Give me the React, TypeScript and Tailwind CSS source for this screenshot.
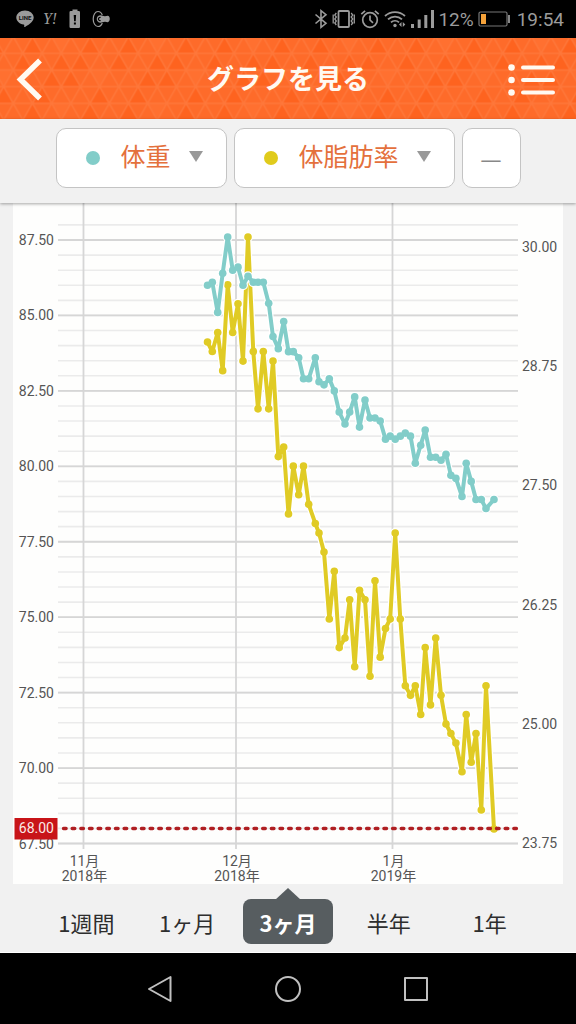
import { useState } from "react"

const periods = [
  { id: "week", label: "1週間" },
  { id: "month", label: "1ヶ月" },
  { id: "quarter", label: "3ヶ月" },
  { id: "half", label: "半年" },
  { id: "year", label: "1年" },
]

// x position of each measurement on the time axis
const times = [
  194.5, 199.3, 204.7, 209.7, 214.7, 219.7, 225, 230, 235, 240.3,
  245, 250.3, 255.7, 260, 265.3, 270.7, 275.5, 280.3, 285.7, 290.5,
  295.7, 302.3, 306, 311, 316.3, 321.3, 326.2, 332, 336.7, 341.7,
  346.5, 352, 357, 362, 367.2, 372.5, 377.2, 382.2, 387.3, 392.3,
  397.5, 402.3, 407.7, 412.2, 417.5, 422.7, 428, 433, 437.9, 442.9,
  449, 453.2, 458.2, 463, 468.3, 473, 481,
]

const weight = [
  86.0, 86.1, 85.1, 86.4, 87.6, 86.5, 86.6, 86.0, 86.3, 86.1,
  86.1, 86.1, 85.4, 84.3, 83.9, 84.8, 83.8, 83.8, 83.6, 82.9,
  82.9, 83.6, 82.8, 82.7, 82.9, 82.5, 81.8, 81.4, 81.8, 82.3,
  81.3, 82.2, 81.6, 81.6, 81.5, 80.9, 81.0, 80.9, 81.0, 81.1,
  81.0, 80.1, 80.7, 81.2, 80.3, 80.3, 80.2, 80.4, 79.7, 79.6,
  79.0, 80.1, 79.5, 78.9, 78.9, 78.6, 78.9,
]

const bodyFat = [
  29.0, 28.9, 29.1, 28.7, 29.6, 29.1, 29.4, 28.8, 30.1, 28.9,
  28.3, 28.9, 28.3, 28.8, 27.8, 27.9, 27.2, 27.7, 27.4, 27.7,
  27.3, 27.1, 27.0, 26.8, 26.1, 26.6, 25.8, 25.9, 26.3, 25.6,
  26.4, 26.3, 25.5, 26.5, 25.7, 26.0, 26.1, 27.0, 26.1, 25.4,
  25.3, 25.4, 25.1, 25.8, 25.2, 25.9, 25.3, 25.0, 24.9, 24.8,
  24.5, 25.1, 24.6, 24.9, 24.1, 25.4, 23.9,
]

const months = [
  { x: 70.5, month: "11月", year: "2018年" },
  { x: 223, month: "12月", year: "2018年" },
  { x: 379.5, month: "1月", year: "2019年" },
]

const weightTicks = [87.5, 85, 82.5, 80, 77.5, 75, 72.5, 70, 67.5]
const fatTicks = [30, 28.75, 27.5, 26.25, 25, 23.75]
const minorTicks = Array.from({ length: 42 }, (_, i) => 88 - i * 0.5)

const weightY = (v: number) => 37 + (87.5 - v) * 30.175
const fatY = (v: number) => 43.5 + (30 - v) * 95.5

function Series({ values, scale, color }: { values: number[]; scale: (v: number) => number; color: string }) {
  const points = values.map((v, i) => [times[i], scale(v)])
  const line = points.map((p) => p.join(",")).join(" ")

  return (
    <g>
      <polyline points={line} fill="none" stroke="#fff" strokeWidth="6.5" strokeLinejoin="round" />
      {points.map(([x, y]) => (
        <circle key={x} cx={x} cy={y} r="5" fill="#fff" />
      ))}
      <polyline points={line} fill="none" stroke={color} strokeWidth="4" strokeLinejoin="round" />
      {points.map(([x, y]) => (
        <circle key={x} cx={x} cy={y} r="3.8" fill={color} />
      ))}
    </g>
  )
}

function Chart() {
  return (
    <svg viewBox="0 0 550 681" className="block w-full h-auto bg-[#fefefd]" role="img" aria-label="体重と体脂肪率">
      {minorTicks.map((v) => (
        <line key={v} x1="45" x2="505" y1={weightY(v)} y2={weightY(v)} stroke="#ebebeb" strokeWidth="1.6" />
      ))}
      {weightTicks.map((v) => (
        <line key={v} x1="45" x2="505" y1={weightY(v)} y2={weightY(v)} stroke="#d6d6d6" strokeWidth="1.8" />
      ))}
      {months.map((m) => (
        <line key={m.x} x1={m.x} x2={m.x} y1="0" y2="646" stroke="#d6d6d6" strokeWidth="1.8" />
      ))}

      <Series values={bodyFat} scale={fatY} color="#e0cb25" />
      <Series values={weight} scale={weightY} color="#82cdc9" />

      <g fontSize="14" fill="#555">
        {weightTicks.map((v) => (
          <text key={v} x="41" y={weightY(v) + 5} textAnchor="end">
            {v.toFixed(2)}
          </text>
        ))}
        {fatTicks.map((v) => (
          <text key={v} x="509" y={fatY(v) + 5}>
            {v.toFixed(2)}
          </text>
        ))}
        {months.map((m) => (
          <g key={m.x} textAnchor="middle">
            <text x={m.x + 1} y="663">
              {m.month}
            </text>
            <text x={m.x + 1} y="678">
              {m.year}
            </text>
          </g>
        ))}
      </g>

      {/* Target weight */}
      <line
        x1="50.5"
        x2="503.5"
        y1="625.5"
        y2="625.5"
        stroke="#b01f22"
        strokeWidth="3.4"
        strokeLinecap="round"
        strokeDasharray="2.6 6.06"
      />
      <rect x="1.5" y="615" width="43" height="21.5" fill="#c81418" />
      <text x="41" y="630" fontSize="14" fill="#fbe9e7" textAnchor="end">
        68.00
      </text>
    </svg>
  )
}

function StatusBar() {
  return (
    <div className="flex h-[38px] items-center justify-between bg-black pl-4 pr-3 text-[#9b9b9b]">
      <div className="flex items-center gap-[7px]">
        <svg width="18" height="18" viewBox="0 0 18 18" aria-label="LINE">
          <path d="M9 .5C4.2.5.3 3.700.3 7.600c0 3.500 3.100 6.400 7.300 7 .9.2.7.8.6 1.800 0 .6.3.8.9.5 1.800-1 8.600-4.600 8.600-9.300C17.700 3.700 13.800.5 9 .5z" fill="currentColor" />
          <text x="9" y="9.800" fontSize="6" fontWeight="700" textAnchor="middle" fill="#111">
            LINE
          </text>
        </svg>
        <span className="w-[18px] text-center font-['Liberation_Serif',serif] text-base italic leading-none">Y!</span>
        <svg width="18" height="20" viewBox="0 0 18 20" aria-hidden="true">
          <path d="M6.500.5h5V2h1.300q1.200 0 1.200 1.200v14.600q0 1.200-1.200 1.200H4.700q-1.200 0-1.200-1.200V3.200Q3.500 2 4.700 2h1.800z" fill="currentColor" />
          <path d="M7.700 6h2.400l-.4 6.200H8.100zM7.900 13.500h2v2h-2z" fill="#000" />
        </svg>
        <svg width="20" height="18" viewBox="0 0 20 18" aria-hidden="true">
          <path d="M11.300 5C10.500 2.800 8.900 1.500 7 1.500c-2.800 0-4.800 3.400-4.800 7.500s2 7.500 4.800 7.500c1.900 0 3.500-1.300 4.300-3.500" fill="none" stroke="currentColor" strokeWidth="1.200" />
          <path d="M9 5.300c1.800-.3 3.200 1 5 .9l2.700-.4c2.800.2 2.800 6.200 0 6.400l-2.700-.4c-1.800-.1-3.200 1.200-5 .9-4.300-.5-4.300-6.900 0-7.400z" fill="currentColor" />
          <path d="M9.600 7.500a1.600 1.600 0 1 0 0 3" fill="none" stroke="#000" strokeWidth="1.200" />
        </svg>
      </div>

      <div className="flex items-center text-[19px]">
        <svg width="14" height="20" viewBox="0 0 14 20" fill="none" stroke="currentColor" strokeWidth="1.600" aria-hidden="true">
          <path d="M1.500 5.500 12 14.300 7 18.300V1.700l5 4L1.500 14.500" />
        </svg>
        <svg width="24" height="20" viewBox="0 0 24 20" className="ml-1" fill="none" stroke="currentColor" aria-hidden="true">
          <rect x="6.500" y="2" width="10.500" height="16" rx="1" strokeWidth="1.800" />
          <path d="M4.300 4 2.800 6l1.500 2-1.500 2 1.500 2-1.500 2 1.500 2M1.200 5.500v9M19.200 4l1.500 2-1.500 2 1.500 2-1.500 2 1.500 2-1.500 2M22.300 5.500v9" strokeWidth="1.300" />
        </svg>
        <svg width="20" height="20" viewBox="0 0 20 20" className="ml-1" fill="none" stroke="currentColor" strokeWidth="1.700" aria-hidden="true">
          <circle cx="10" cy="11" r="7.300" />
          <path d="M10 6.500V11l3 2.800M1.300 5.200l3.800-3.400M18.700 5.200l-3.800-3.400" />
        </svg>
        <svg width="24" height="20" viewBox="0 0 24 20" className="ml-1" fill="none" stroke="currentColor" aria-hidden="true">
          <path d="M1 7c5.500-5.300 14.500-5.300 20 0M4 10.300c4-3.700 10-3.700 14 0M7 13.400c2.300-2 5.700-2 8 0" strokeWidth="1.800" />
          <circle cx="11" cy="16.500" r="1.700" fill="currentColor" stroke="none" />
          <path d="m17.500 13-2.500 2.500 2.500 2.500zM18.800 13v5l2.500-2.500z" fill="currentColor" stroke="none" />
        </svg>
        <svg width="24" height="20" viewBox="0 0 24 20" className="ml-[3px]" fill="currentColor" aria-hidden="true">
          <path d="M0 15h3v4H0zM6.700 10.500h3V19h-3zM13.300 6h3v13h-3zM20 1h3v18h-3z" />
        </svg>
        <span className="ml-[3px] leading-none">12%</span>
        <svg width="33" height="18" viewBox="0 0 33 18" className="ml-1" aria-hidden="true">
          <rect x="1" y="2" width="28" height="14" rx="1.500" fill="none" stroke="#777" strokeWidth="1.200" />
          <rect x="3" y="4" width="5" height="10" fill="#f5a23a" />
          <path d="M31 5v8" stroke="#aaa" strokeWidth="1.600" />
        </svg>
        <span className="ml-[6px] leading-none">19:54</span>
      </div>
    </div>
  )
}

function TrianglePattern() {
  return (
    <svg className="absolute inset-0 h-full w-full" aria-hidden="true">
      <defs>
        <pattern id="triangles" width="96" height="66.800" patternUnits="userSpaceOnUse" patternTransform="translate(13.300 -1.400)">
          <path
            d="M19.200 0l9.600 16.700H9.600zM76.800 0l9.600 16.700H67.200zM9.600 16.700l9.600 16.700H0zM48 16.700l9.600 16.700H38.400zM67.200 16.700l9.600 16.700H57.600zM38.400 33.400l9.600 16.700H28.800zM57.600 33.400l9.600 16.700H48zM28.800 50.100l9.600 16.700H19.200zM86.400 50.100L96 66.800H76.800z"
            fill="#fe631f"
          />
          <path d="M38.400 0h19.200L48 16.700zM76.800 33.400H96l-9.600 16.700z" fill="#ff7030" />
          <path
            d="M0 0h96M0 16.700h96M0 33.400h96M0 50.100h96M0 66.800h96M0 0l38.400 66.800M19.200 0l38.400 66.800M38.400 0l38.400 66.800M57.600 0L96 66.800M76.800 0L96 33.400M0 33.400l19.200 33.400M0 0l-9.600 16.700M19.200 0L0 33.400M38.400 0L0 66.800M57.600 0L19.200 66.800M76.800 0L38.400 66.800M96 0L57.600 66.800M96 33.400L76.800 66.800"
            stroke="#fe773a"
            strokeWidth="1.500"
            fill="none"
          />
        </pattern>
      </defs>
      <rect width="100%" height="100%" fill="url(#triangles)" />
    </svg>
  )
}

function Header() {
  return (
    <header className="relative bg-[#fe6b2a]">
      <TrianglePattern />
      <div className="relative flex h-[81px] items-center justify-between px-4 text-[#fffaf2]">
        <button type="button" aria-label="戻る" className="w-12 cursor-pointer">
          <svg width="30" height="44" viewBox="0 0 30 44" fill="none" stroke="currentColor" strokeWidth="5.500">
            <path d="M24 3.500 4.500 22.500 24 41.500" />
          </svg>
        </button>
        <h1 className="pt-1 text-[27px] font-bold">グラフを見る</h1>
        <button type="button" aria-label="メニュー" className="flex w-12 cursor-pointer justify-end">
          <svg width="54" height="36" viewBox="0 0 54 36" className="shrink-0" fill="currentColor">
            <path d="M17 6.500h30M17 19h30M17 31.500h30" stroke="currentColor" strokeWidth="4" strokeLinecap="round" />
            <circle cx="5.500" cy="6.500" r="3.300" />
            <circle cx="5.500" cy="19" r="3.300" />
            <circle cx="5.500" cy="31.500" r="3.300" />
          </svg>
        </button>
      </div>
    </header>
  )
}

function SeriesSelect({ name, dotClass }: { name: string; dotClass: string }) {
  return (
    <label className="flex h-[60px] items-center rounded-[10px] border border-[#c4c4c4] bg-white pl-[29px] pr-[23px]">
      <span className={`h-[14px] w-[14px] rounded-full ${dotClass}`} />
      <select aria-label={name} className="ml-[21px] mr-[17px] cursor-pointer appearance-none bg-transparent text-[25px] text-[#e4703c]">
        <option>{name}</option>
      </select>
      <svg width="14" height="17" viewBox="0 0 14 17" aria-hidden="true">
        <path d="M0 1h14L7 12z" fill="#999" />
      </svg>
    </label>
  )
}

export default function App() {
  const [period, setPeriod] = useState("quarter")

  return (
    <div className="flex min-h-screen flex-col bg-[#f1f1f1] font-[Roboto,'Noto_Sans_CJK_JP',sans-serif]">
      <StatusBar />
      <Header />

      {/* Series selectors */}
      <div className="relative z-10 flex h-[84px] items-center justify-center gap-[7px] bg-[#f1f1f1] pb-[6px] shadow-[0_1px_3px_rgba(0,0,0,0.35)]">
        <SeriesSelect name="体重" dotClass="bg-[#82cdc9]" />
        <SeriesSelect name="体脂肪率" dotClass="bg-[#e0cb1c]" />
        <select
          aria-label="3つ目の項目"
          className="h-[60px] w-[59px] cursor-pointer appearance-none rounded-[10px] border border-[#c4c4c4] bg-white text-center font-['Noto_Sans_CJK_JP',sans-serif] text-2xl text-[#888]"
        >
          <option>—</option>
        </select>
      </div>

      <main className="px-[13px]">
        <Chart />
      </main>

      {/* Period tabs */}
      <div className="flex h-[69px] items-center border-b border-white px-9 pt-[7px] font-['Noto_Sans_CJK_JP',sans-serif] text-[22px] text-[#2e2e2e]">
        {periods.map((p) => (
          <div key={p.id} className="flex flex-1 justify-center">
            <button
              type="button"
              aria-pressed={period === p.id}
              onClick={() => setPeriod(p.id)}
              className={`relative h-[45px] w-[90px] cursor-pointer rounded-lg pt-[2px] ${
                period === p.id ? "bg-[#575d60] font-bold text-white" : ""
              }`}
            >
              {period === p.id && (
                <svg width="26" height="12" viewBox="0 0 26 12" className="absolute -top-[11px] left-8" aria-hidden="true">
                  <path d="M0 12 13 0l13 12z" fill="#575d60" />
                </svg>
              )}
              {p.label}
            </button>
          </div>
        ))}
      </div>

      {/* System navigation */}
      <nav className="flex flex-1 items-center justify-center gap-[100px] bg-black py-5 text-[#c0c0c0]">
        <button type="button" aria-label="戻る" className="cursor-pointer">
          <svg width="28" height="28" viewBox="0 0 28 28" fill="none" stroke="currentColor" strokeWidth="2" strokeLinejoin="round">
            <path d="M24.500 2v24L3 14z" />
          </svg>
        </button>
        <button type="button" aria-label="ホーム" className="cursor-pointer">
          <svg width="28" height="28" viewBox="0 0 28 28" fill="none" stroke="currentColor" strokeWidth="2">
            <circle cx="14" cy="14" r="12" />
          </svg>
        </button>
        <button type="button" aria-label="履歴" className="cursor-pointer">
          <svg width="28" height="28" viewBox="0 0 28 28" fill="none" stroke="currentColor" strokeWidth="2" strokeLinejoin="round">
            <rect x="3" y="3" width="22" height="22" />
          </svg>
        </button>
      </nav>
    </div>
  )
}
